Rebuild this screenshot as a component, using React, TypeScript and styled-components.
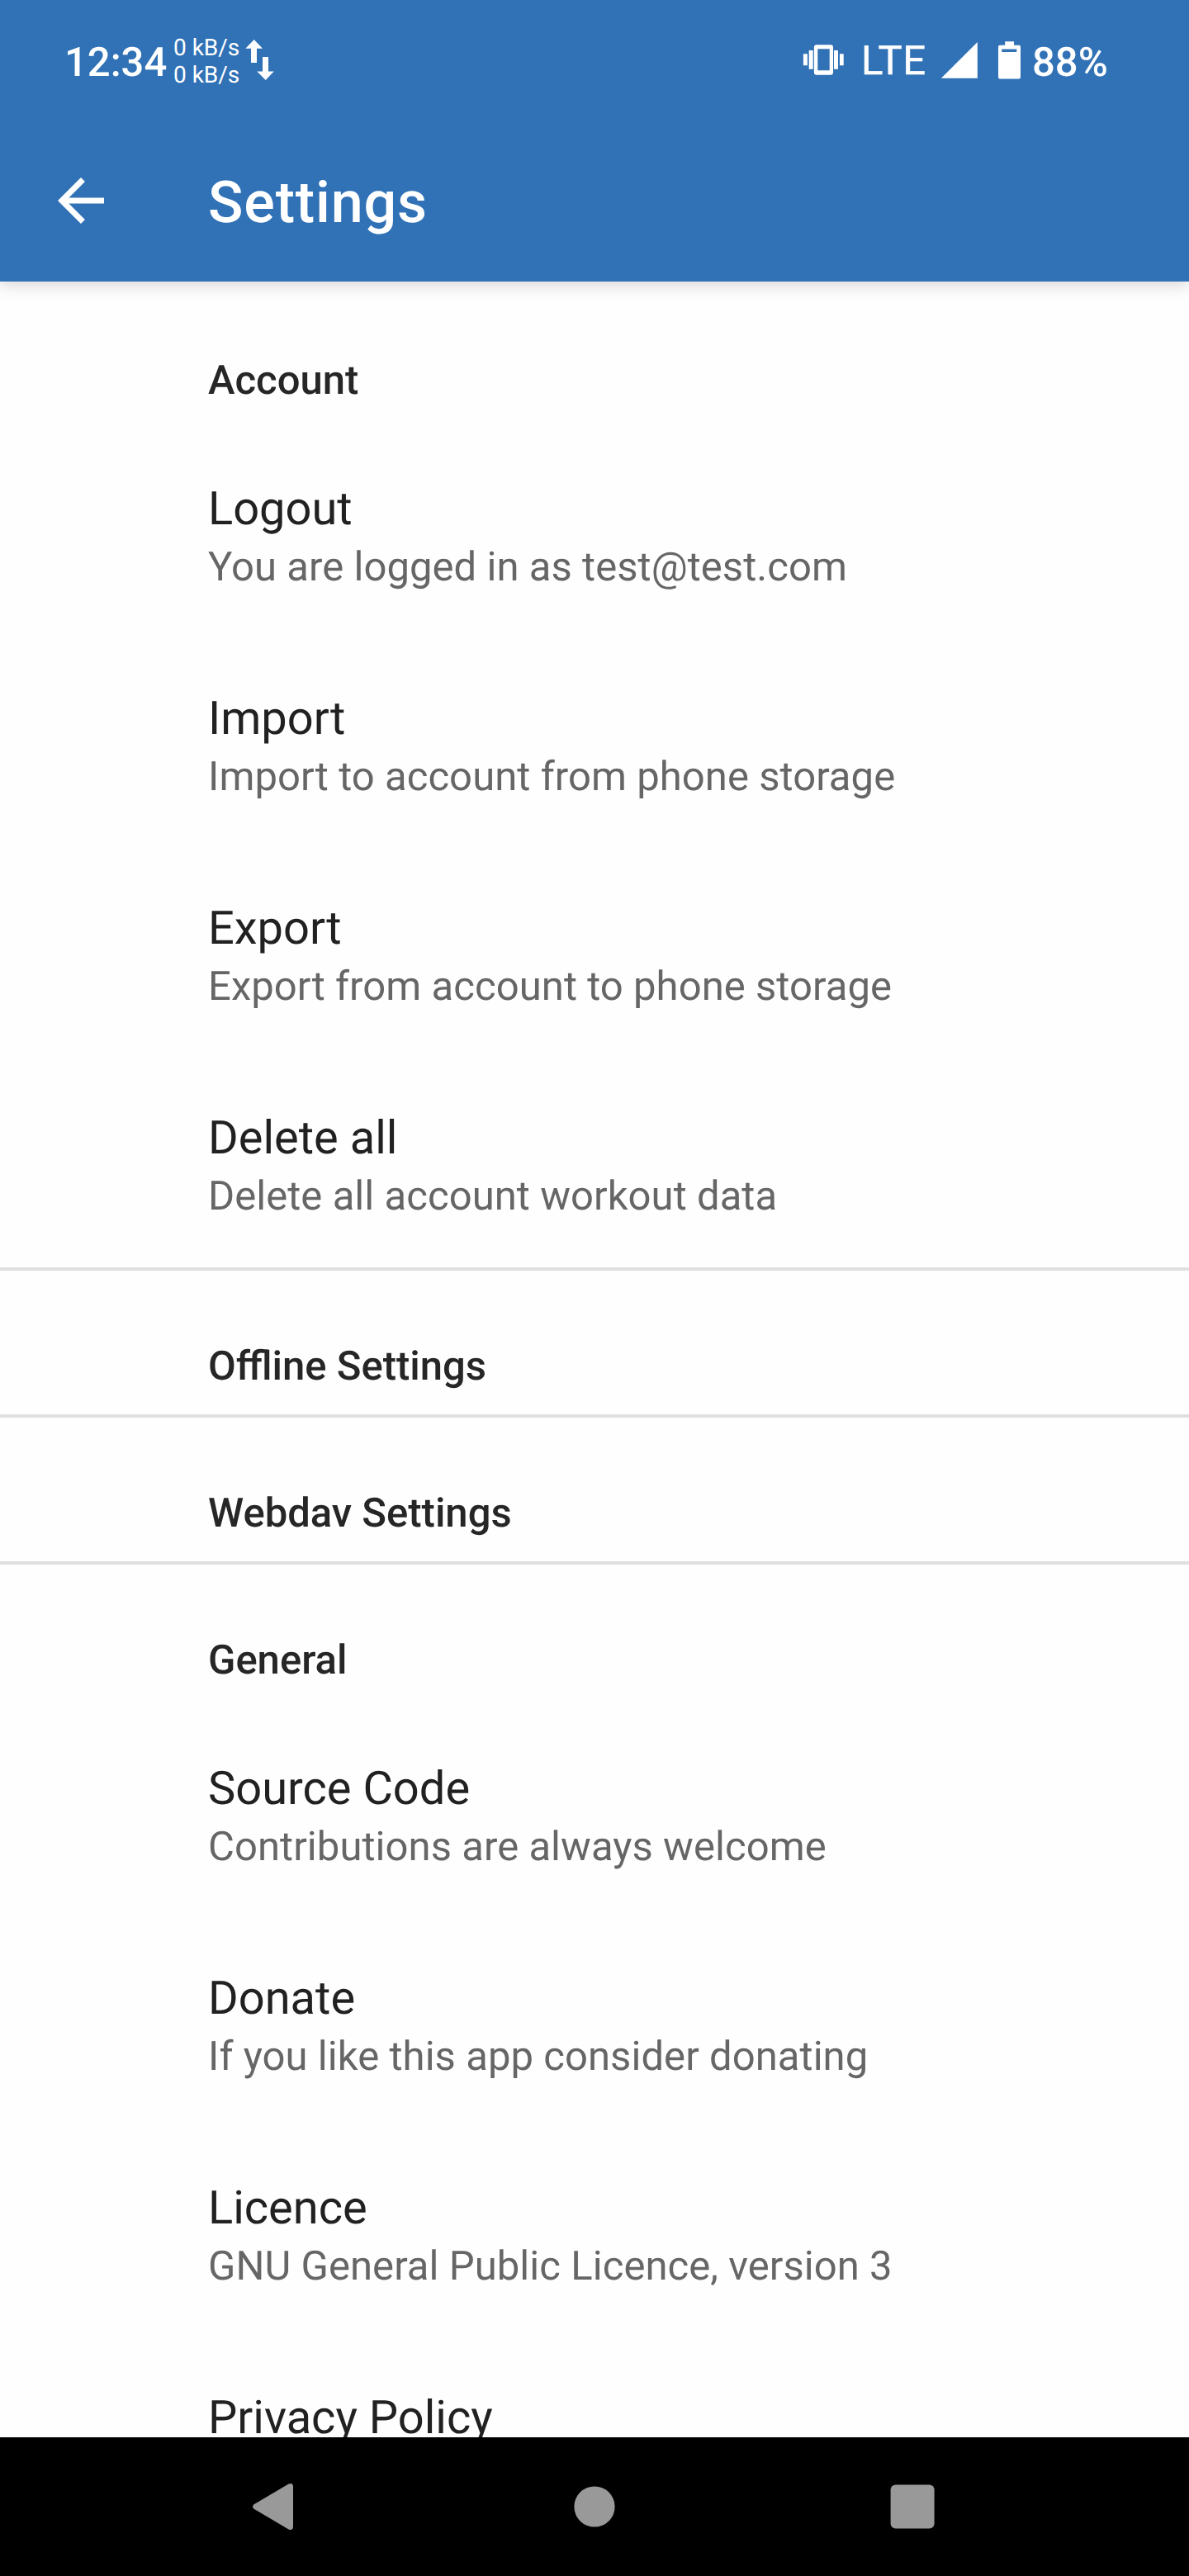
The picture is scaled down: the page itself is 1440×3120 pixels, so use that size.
import React from "react";
import styled, { createGlobalStyle } from "styled-components";

const BLUE = "#3172b6";

const GlobalStyle = createGlobalStyle`
  *, *::before, *::after { box-sizing: border-box; }
  body { margin: 0; background: #fefefe; }
`;

const Screen = styled.div`
  display: flex;
  flex-direction: column;
  width: 1440px;
  height: 3120px;
  overflow: hidden;
  background: #fefefe;
  font-family: Roboto, "Liberation Sans", sans-serif;
  text-rendering: geometricPrecision;
`;

const Header = styled.header`
  flex: none;
  height: 341px;
  background: ${BLUE};
  color: #fff;
  z-index: 1;
  box-shadow: 0 5px 18px rgba(0, 0, 0, 0.15);
`;

const StatusBar = styled.div`
  display: flex;
  justify-content: space-between;
  height: 145px;
  padding: 0 98px 0 78px;
`;

const StatusGroup = styled.div`
  display: flex;
  align-items: flex-start;
`;

const StatusText = styled.span<{ $top: number; $width: number }>`
  width: ${(p) => p.$width}px;
  margin-top: ${(p) => p.$top}px;
  font-size: 49px;
  line-height: 58px;
  font-weight: 500;
  white-space: nowrap;
`;

const NetworkType = styled(StatusText)`
  font-weight: 400;
  letter-spacing: 0.6px;
  -webkit-text-stroke: 0.5px #fff;
`;

const NetSpeed = styled.div`
  width: 87px;
  margin-top: 41px;
  font-size: 28px;
  line-height: 33px;
  white-space: nowrap;
`;

const StatusIcon = styled.svg<{ $gap?: number }>`
  display: block;
  flex: none;
  margin: 48px ${(p) => p.$gap ?? 0}px 0 0;
  fill: #fff;
`;

const Toolbar = styled.div`
  display: flex;
  align-items: center;
  height: 196px;
  padding-left: 56px;
`;

const BackButton = styled.button`
  width: 84px;
  height: 84px;
  margin-right: 112px;
  padding: 0;
  border: 0;
  background: none;
  color: inherit;
  svg { display: block; fill: currentColor; }
`;

const PageTitle = styled.h1`
  margin: 6px 0 0;
  font-size: 70px;
  line-height: 82px;
  font-weight: 500;
  letter-spacing: 0.0125em;
`;

const Content = styled.main`
  flex: 1;
  min-height: 0;
  overflow: hidden;
`;

const Section = styled.section<{ $first?: boolean }>`
  border-top: 4px solid ${(p) => (p.$first ? "transparent" : "#e0e0e0")};
`;

const SectionTitle = styled.h2`
  margin: 0;
  padding: 87px 0 29px 252px;
  font-size: 49px;
  line-height: 58px;
  font-weight: 500;
  color: #262626;
`;

const Row = styled.div`
  height: 254px;
  padding: 64px 0 0 252px;
`;

const RowTitle = styled.div`
  font-size: 56px;
  line-height: 66px;
  color: #212121;
`;

const RowSummary = styled.div`
  margin-top: 9px;
  font-size: 49px;
  line-height: 58px;
  letter-spacing: 0.06px;
  color: #666;
`;

const NavBar = styled.nav`
  display: flex;
  flex: none;
  height: 168px;
  padding: 0 144px;
  background: #000;
`;

const NavButton = styled.div`
  display: flex;
  flex: 1;
  align-items: center;
  justify-content: center;
  svg { display: block; fill: #999; }
`;

const sections = [
  {
    title: "Account",
    rows: [
      ["Logout", "You are logged in as test@test.com"],
      ["Import", "Import to account from phone storage"],
      ["Export", "Export from account to phone storage"],
      ["Delete all", "Delete all account workout data"],
    ],
  },
  { title: "Offline Settings", rows: [] },
  { title: "Webdav Settings", rows: [] },
  {
    title: "General",
    rows: [
      ["Source Code", "Contributions are always welcome"],
      ["Donate", "If you like this app consider donating"],
      ["Licence", "GNU General Public Licence, version 3"],
      ["Privacy Policy", ""],
    ],
  },
];

export default function App() {
  return (
    <Screen>
      <GlobalStyle />
      <Header>
        <StatusBar>
          <StatusGroup>
            <StatusText $top={47} $width={132}>12:34</StatusText>
            <NetSpeed>
              <div>0 kB/s</div>
              <div>0 kB/s</div>
            </NetSpeed>
            <StatusIcon width="36" height="50" viewBox="0 0 36 50">
              <path d="M10.700 0 21 10.700H14V28H7V10.700H.300Z" />
              <path d="M21 21h7v17.400h6.700L24.700 49 14.300 38.400H21Z" />
            </StatusIcon>
          </StatusGroup>
          <StatusGroup>
            <StatusIcon $gap={21} width="50" height="48" viewBox="0 0 50 48">
              <path
                fillRule="evenodd"
                d="M16.900 6.300h17.100a3 3 0 0 1 3 3v30.400a3 3 0 0 1-3 3h-17.100a3 3 0 0 1-3-3V9.300a3 3 0 0 1 3-3ZM18.300 11.300v26h14.400v-26Z"
              />
              <path d="M.900 17.300h5v14h-5ZM7.700 13h5v22.700h-5ZM38 13h5v22.700h-5ZM45 17.300h4.700v14H45Z" />
            </StatusIcon>
            <NetworkType $top={45} $width={96}>LTE</NetworkType>
            <StatusIcon $gap={25} width="45" height="48" viewBox="0 0 45 48">
              <path d="M.900 46.700 44.800 3v43.700Z" />
            </StatusIcon>
            <StatusIcon $gap={13} width="28" height="50" viewBox="0 0 28 50">
              <path
                fillRule="evenodd"
                d="M8.200 2.200h10.800v4.500h6a2 2 0 0 1 2 2v36.800a2 2 0 0 1-2 2H2a2 2 0 0 1-2-2V8.700a2 2 0 0 1 2-2h6.200ZM4.300 11.400v3.500h18v-3.500Z"
              />
            </StatusIcon>
            <StatusText $top={47} $width={92}>88%</StatusText>
          </StatusGroup>
        </StatusBar>
        <Toolbar>
          <BackButton aria-label="Back">
            <svg width="84" height="84" viewBox="0 0 24 24">
              <path d="M20 11H7.830l5.590-5.590L12 4l-8 8 8 8 1.410-1.410L7.830 13H20v-2z" />
            </svg>
          </BackButton>
          <PageTitle>Settings</PageTitle>
        </Toolbar>
      </Header>
      <Content>
        {sections.map((section, index) => (
          <Section key={section.title} $first={index === 0}>
            <SectionTitle>{section.title}</SectionTitle>
            {section.rows.map(([title, summary]) => (
              <Row key={title}>
                <RowTitle>{title}</RowTitle>
                {summary && <RowSummary>{summary}</RowSummary>}
              </Row>
            ))}
          </Section>
        ))}
      </Content>
      <NavBar>
        <NavButton>
          <svg width="84" height="84" viewBox="0 0 84 84">
            <path d="M13.600 39.200 55.500 14.600Q61 12.500 61 18V66Q61 71.500 55.500 69.400L13.600 44.800Q10.400 42 13.600 39.200Z" />
          </svg>
        </NavButton>
        <NavButton>
          <svg width="84" height="84" viewBox="0 0 84 84">
            <circle cx="42" cy="42" r="24.600" />
          </svg>
        </NavButton>
        <NavButton>
          <svg width="84" height="84" viewBox="0 0 84 84">
            <rect x="16.600" y="15.400" width="53" height="53" rx="6" />
          </svg>
        </NavButton>
      </NavBar>
    </Screen>
  );
}
